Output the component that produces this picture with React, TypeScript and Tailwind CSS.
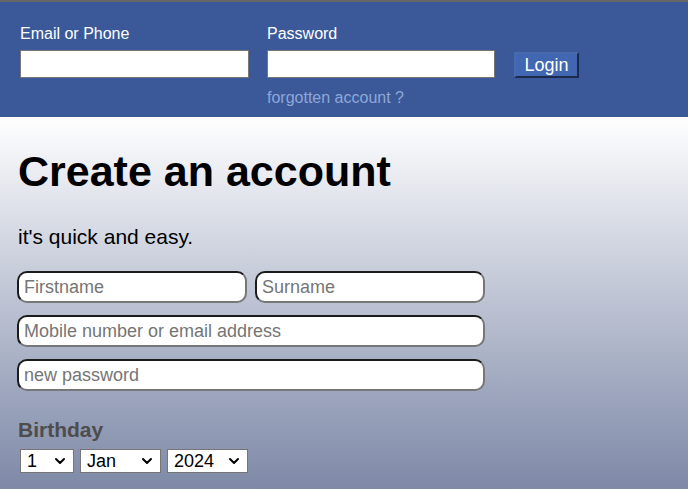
import React from "react";
import { ChevronDown } from "lucide-react";

const signupInput =
  "h-[32px] rounded-[10px] border-2 border-t-[#1b1b1b] border-l-[#1b1b1b] border-b-[#777] border-r-[#777] bg-white px-[5px] text-[18px] text-black placeholder:text-[#757575] outline-none";

const Select: React.FC<{ width: string; value: string; options: string[] }> = ({
  width,
  value,
  options,
}) => (
  <span className={`relative inline-block ${width}`}>
    <select
      defaultValue={value}
      className="h-[24px] w-full appearance-none border border-[#767676] bg-white pl-[6px] text-[18px] leading-[20px] text-black outline-none"
    >
      {options.map((o) => (
        <option key={o}>{o}</option>
      ))}
    </select>
    <ChevronDown
      className="pointer-events-none absolute right-[6px] top-[4px] h-[16px] w-[16px] text-black"
      strokeWidth={3}
    />
  </span>
);

export default function App() {
  return (
    <div className="min-h-[489px] font-['Liberation_Sans',Arial,sans-serif]">
      <header className="border-t-2 border-[#666] bg-[#3b5998] px-[20px] pb-[10px] pt-[23px] text-white">
        <div className="flex items-start">
          <div className="flex w-[229px] flex-col">
            <label className="text-[16px] leading-[18px]">Email or Phone</label>
            <input className="mt-[7px] h-[28px] w-[229px] border border-[#777] bg-white text-black outline-none" />
          </div>
          <div className="ml-[18px] flex w-[228px] flex-col">
            <label className="text-[16px] leading-[18px]">Password</label>
            <input
              type="password"
              className="mt-[7px] h-[28px] w-[228px] border border-[#777] bg-white text-black outline-none"
            />
            <a className="mt-[11px] text-[16px] leading-[18px] text-[#8ea7da]">forgotten account ?</a>
          </div>
          <button className="ml-[19px] mt-[27px] h-[26px] w-[65px] border-2 border-t-[#4a6ab0] border-l-[#4a6ab0] border-b-[#1c2a4c] border-r-[#1c2a4c] bg-[#4267b2] text-[18px] leading-[20px] text-white">
            Login
          </button>
        </div>
      </header>
      <main className="h-[372px] bg-gradient-to-b from-white to-[#7e89a7] px-[17px] pt-[30px]">
        <h1 className="pl-[1px] text-[43px] font-bold leading-[49px] text-black">Create an account</h1>
        <p className="mt-[29px] pl-[1px] text-[21px] leading-[24px] text-black">it's quick and easy.</p>
        <form className="mt-[22px] flex w-[468px] flex-col gap-[12px]">
          <div className="flex gap-[8px]">
            <input placeholder="Firstname" className={`${signupInput} w-[230px]`} />
            <input placeholder="Surname" className={`${signupInput} w-[230px]`} />
          </div>
          <input placeholder="Mobile number or email address" className={`${signupInput} w-[468px]`} />
          <input type="password" placeholder="new password" className={`${signupInput} w-[468px]`} />
        </form>
        <h3 className="mt-[27px] pl-[1px] text-[21px] font-bold leading-[23px] text-[#4d4d4d]">Birthday</h3>
        <div className="mt-[8px] flex gap-[6px] pl-[3px]">
          <Select width="w-[54px]" value="1" options={["1", "2", "3"]} />
          <Select width="w-[81px]" value="Jan" options={["Jan", "Feb", "Mar"]} />
          <Select width="w-[81px]" value="2024" options={["2024", "2023", "2022"]} />
        </div>
      </main>
    </div>
  );
}
